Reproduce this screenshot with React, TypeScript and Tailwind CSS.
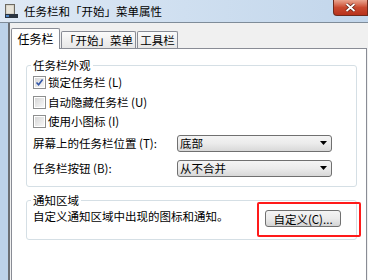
import React from 'react';

const Checkbox: React.FC<{ checked?: boolean }> = ({ checked }) => (
  <div className="w-[13px] h-[13px] border border-[#8e8f8f] bg-white p-[1px] shrink-0">
    <div className="w-full h-full bg-gradient-to-br from-[#d6d6d6] to-[#f8f8f8] relative">
      {checked && (
        <svg viewBox="0 0 9 9" className="absolute inset-0 w-full h-full">
          <path d="M1.5 4.5 L3.6 6.8 L7.6 1.6" fill="none" stroke="#3256a8" strokeWidth="1.6" />
        </svg>
      )}
    </div>
  </div>
);

const Dropdown: React.FC<{ value: string }> = ({ value }) => (
  <div className="w-[155px] h-[17px] border border-[#707070] rounded-[3px] bg-gradient-to-b from-[#f4f4f4] via-[#ebebeb] to-[#d8d8d8] flex items-center justify-between pl-[2px] pr-[4px]">
    <span className="leading-[15px]">{value}</span>
    <svg width="7" height="4" viewBox="0 0 7 4">
      <path d="M0 0 H7 L3.5 4 Z" fill="#000" />
    </svg>
  </div>
);

const App: React.FC = () => {
  return (
    <div className="w-[368px] h-[280px] overflow-hidden relative bg-[#f0f0f0] text-black text-[11.5px] font-['Noto_Sans_CJK_SC','Liberation_Sans',sans-serif]">
      {/* Title bar */}
      <div className="h-[23px] flex items-center bg-gradient-to-r from-[#dfe9f5] via-[#cfdff0] to-[#c2d6eb] border-b border-[#7f8c99]">
        <svg width="13" height="14" viewBox="0 0 13 14" className="ml-[5px]">
          <rect x="0.5" y="0.5" width="9" height="12" fill="#c9c4b8" stroke="#6d6a62" />
          <rect x="1.5" y="1.5" width="7" height="8" fill="#e8e4da" />
          <rect x="0" y="10" width="13" height="4" fill="#2b3440" />
          <rect x="1" y="11" width="3" height="2" fill="#4f86c6" />
        </svg>
        <span className="ml-[6px] leading-[14px]">任务栏和「开始」菜单属性</span>
      </div>
      <div className="absolute top-0 right-0 w-[35px] h-[16px] rounded-bl-[4px] border border-t-0 border-[#6e2a1c] bg-gradient-to-b from-[#e9a48f] via-[#c9492f] to-[#b8321c] flex items-center justify-center">
        <svg width="11" height="9" viewBox="0 0 11 9">
          <path d="M1.5 1 L9.5 8 M9.5 1 L1.5 8" stroke="#5a1a10" strokeWidth="3.2" />
          <path d="M1.5 1 L9.5 8 M9.5 1 L1.5 8" stroke="#ffffff" strokeWidth="1.8" />
        </svg>
      </div>

      {/* Body */}
      <div className="flex h-[257px]">
        <div className="w-[8px] bg-[#bcd2e9] shrink-0" />
        <div className="w-[2px] bg-[#6b6f74] shrink-0" />
        <div className="flex-1 pl-[1px] pt-[5px]">
          {/* Tabs */}
          <div className="flex items-end h-[20px]">
            <div className="relative z-10 w-[49px] h-[21px] -mb-[1px] bg-white border border-b-0 border-[#898c95] rounded-t-[2px] flex items-center justify-center">
              <span className="text-[12px] leading-[14px]">任务栏</span>
            </div>
            <div className="ml-[1px] w-[75px] h-[17px] bg-gradient-to-b from-[#fbfbfb] to-[#e7e7e7] border border-b-0 border-[#898c95] rounded-t-[2px] flex items-center justify-center">
              <span className="leading-[14px]">「开始」菜单</span>
            </div>
            <div className="ml-[1px] w-[41px] h-[17px] bg-gradient-to-b from-[#fbfbfb] to-[#e7e7e7] border border-b-0 border-[#898c95] rounded-t-[2px] flex items-center justify-center">
              <span className="leading-[14px]">工具栏</span>
            </div>
          </div>

          {/* Tab panel */}
          <div className="w-[356px] h-[240px] bg-white border border-[#898c95] pt-[9px] pl-[14px] pr-[9px]">
            <fieldset className="border border-[#d5dfe5] rounded-[3px] px-[6px] pb-[9px]">
              <legend className="px-[2px] -ml-[2px] leading-[14px]">任务栏外观</legend>
              <div className="pt-[1px]">
                <div className="h-[19.5px] flex items-center gap-[2px]">
                  <Checkbox checked />
                  <span>锁定任务栏 (L)</span>
                </div>
                <div className="h-[19.5px] flex items-center gap-[2px]">
                  <Checkbox />
                  <span>自动隐藏任务栏 (U)</span>
                </div>
                <div className="h-[19.5px] flex items-center gap-[2px]">
                  <Checkbox />
                  <span>使用小图标 (I)</span>
                </div>
                <div className="mt-[3px] flex items-center">
                  <span className="w-[144px]">屏幕上的任务栏位置 (T):</span>
                  <Dropdown value="底部" />
                </div>
                <div className="mt-[8px] flex items-center">
                  <span className="w-[144px]">任务栏按钮 (B):</span>
                  <Dropdown value="从不合并" />
                </div>
              </div>
            </fieldset>

            <fieldset className="mt-[6px] border border-[#d5dfe5] rounded-[3px] px-[6px] pb-[12px]">
              <legend className="px-[2px] -ml-[2px] leading-[14px]">通知区域</legend>
              <div className="pt-[3px] flex items-start justify-between pr-[9px]">
                <span className="-mt-[1px] leading-[14px]">自定义通知区域中出现的图标和通知。</span>
                <div className="w-[76px] h-[17px] border border-[#707070] rounded-[3px] bg-gradient-to-b from-[#f4f4f4] via-[#ebebeb] to-[#d4d4d4] flex items-center justify-center">
                  <span className="leading-[14px]">自定义(C)...</span>
                </div>
              </div>
            </fieldset>
          </div>
        </div>
      </div>

      {/* Red highlight annotation */}
      <div className="absolute left-[257px] top-[202px] w-[104px] h-[35px] border-2 border-[#ff1a1a] rounded-[2px]" />
    </div>
  );
};

export default App;
